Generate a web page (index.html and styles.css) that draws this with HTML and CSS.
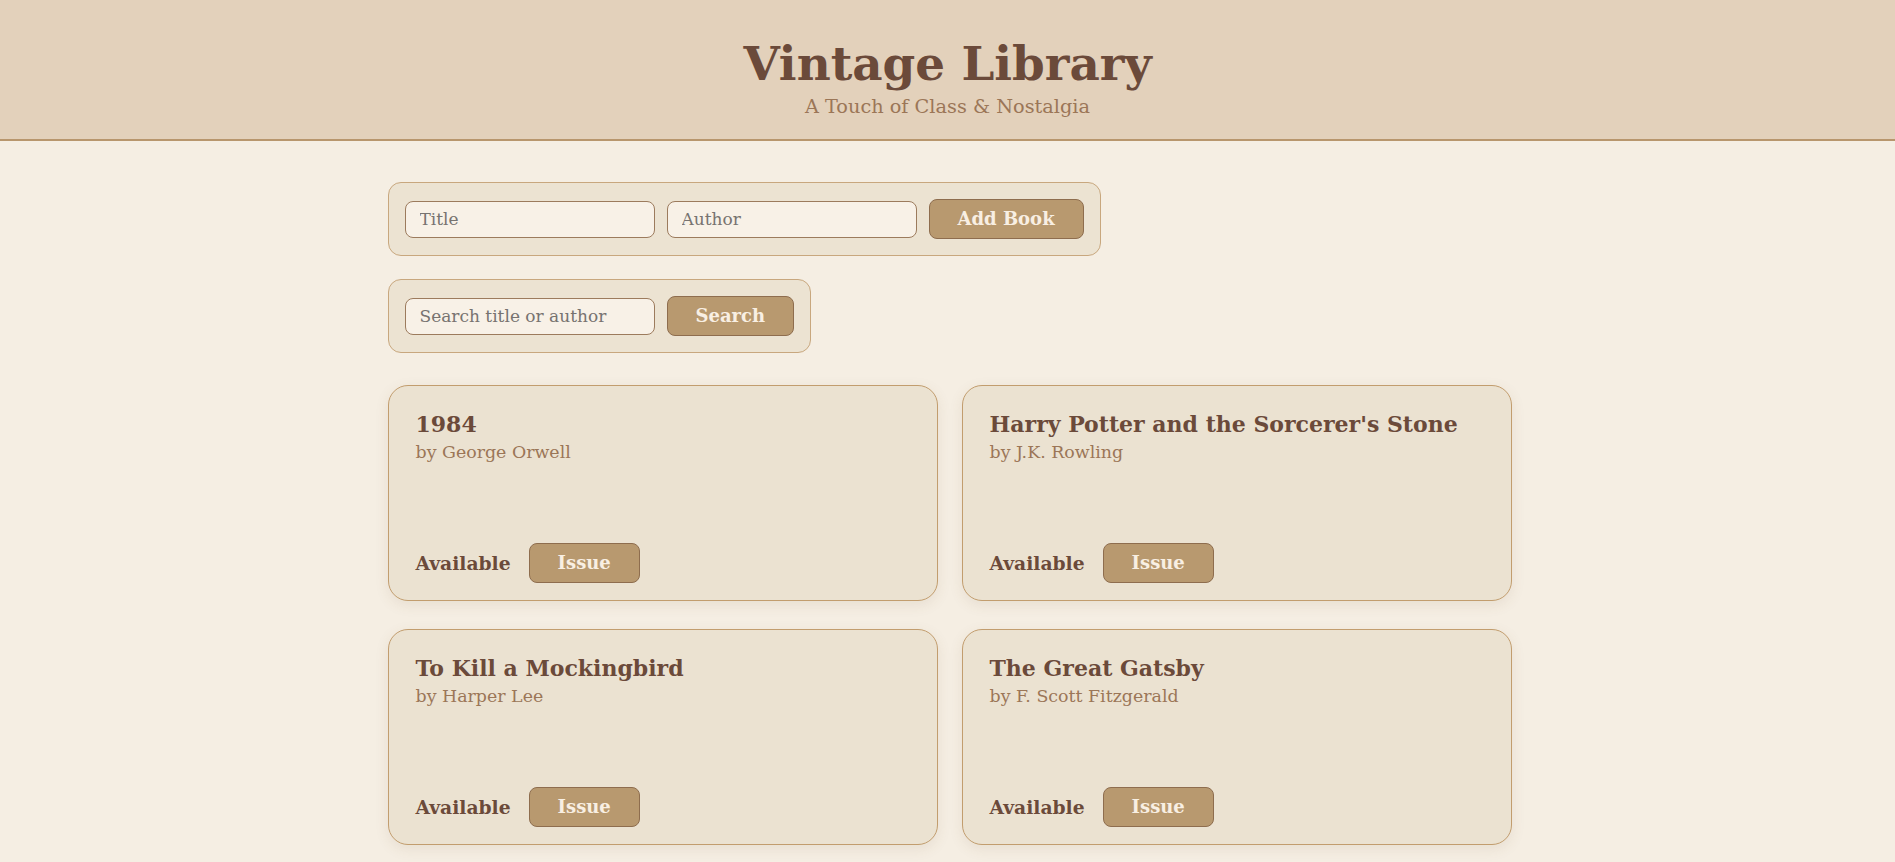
FILE: index.html
```html
<!DOCTYPE html>
<html lang="en">
<head>
<meta charset="utf-8">
<title>Vintage Library</title>
<link rel="stylesheet" href="styles.css">
</head>
<body>
<header class="site-header">
  <h1 class="site-title">Vintage Library</h1>
  <p class="site-subtitle">A Touch of Class &amp; Nostalgia</p>
</header>
<main class="container">
  <form class="panel">
    <input class="field" type="text" placeholder="Title">
    <input class="field" type="text" placeholder="Author">
    <button class="btn" type="button">Add Book</button>
  </form>
  <form class="panel">
    <input class="field" type="text" placeholder="Search title or author">
    <button class="btn" type="button">Search</button>
  </form>
  <section class="book-grid">
    <article class="book-card">
      <h3 class="book-title">1984</h3>
      <p class="book-author">by George Orwell</p>
      <div class="book-footer">
        <span class="book-status">Available</span>
        <button class="btn" type="button">Issue</button>
      </div>
    </article>
    <article class="book-card">
      <h3 class="book-title">Harry Potter and the Sorcerer's Stone</h3>
      <p class="book-author">by J.K. Rowling</p>
      <div class="book-footer">
        <span class="book-status">Available</span>
        <button class="btn" type="button">Issue</button>
      </div>
    </article>
    <article class="book-card">
      <h3 class="book-title">To Kill a Mockingbird</h3>
      <p class="book-author">by Harper Lee</p>
      <div class="book-footer">
        <span class="book-status">Available</span>
        <button class="btn" type="button">Issue</button>
      </div>
    </article>
    <article class="book-card">
      <h3 class="book-title">The Great Gatsby</h3>
      <p class="book-author">by F. Scott Fitzgerald</p>
      <div class="book-footer">
        <span class="book-status">Available</span>
        <button class="btn" type="button">Issue</button>
      </div>
    </article>
  </section>
</main>
</body>
</html>
```
FILE: styles.css
```css
* {
  box-sizing: border-box;
}

body {
  margin: 0;
  background: #f5eee3;
  font-family: "DejaVu Serif", Georgia, serif;
  color: #6b4a3a;
}

.site-header {
  background: #e3d1bb;
  border-bottom: 2px solid #b8966d;
  padding: 37px 16px 21px;
  text-align: center;
}

.site-title {
  margin: 0;
  font-size: 46.8px;
  line-height: 54px;
  font-weight: bold;
  color: #6b4a3a;
}

.site-subtitle {
  margin: 5px 0 0;
  font-size: 19.3px;
  line-height: 22px;
  color: #9b7657;
}

.container {
  width: 1124px;
  margin-left: calc(50% - 560px);
  padding: 41px 0 40px;
}

.panel {
  display: flex;
  width: fit-content;
  align-items: center;
  gap: 12px;
  padding: 16px;
  margin: 0 0 23px;
  background: #ece3d2;
  border: 1px solid #c8a77e;
  border-radius: 13px;
}

.panel + .panel {
  margin-bottom: 32px;
}

.field {
  width: 250px;
  height: 37px;
  padding: 0 14px;
  font-family: inherit;
  font-size: 17px;
  color: #6b4a3a;
  background: #f8f1e7;
  border: 1px solid #9c7b5d;
  border-radius: 8px;
  outline: none;
}

.field::placeholder {
  color: #777370;
}

.btn {
  height: 40px;
  padding: 0 28px;
  font-family: inherit;
  font-size: 18px;
  font-weight: bold;
  line-height: 22px;
  color: #f8efe3;
  background: #b8996f;
  border: 1px solid #8e6d4e;
  border-radius: 8px;
  cursor: pointer;
}

.book-grid {
  display: grid;
  grid-template-columns: 1fr 1fr;
  column-gap: 24px;
  row-gap: 28px;
}

.book-card {
  display: flex;
  flex-direction: column;
  height: 216px;
  padding: 25px 24px 17px 27px;
  background: #ebe2d1;
  border: 1px solid #c29d6e;
  border-radius: 20px;
  box-shadow: 0 4px 14px rgba(120, 85, 50, 0.10);
}

.book-title {
  margin: 0;
  font-size: 22px;
  line-height: 27px;
  font-weight: bold;
  color: #6b4a3a;
}

.book-author {
  margin: 4px 0 0;
  font-size: 17.4px;
  line-height: 21px;
  color: #9b7657;
}

.book-footer {
  margin-top: auto;
  display: flex;
  align-items: center;
  gap: 18px;
}

.book-status {
  font-size: 18.7px;
  font-weight: bold;
  color: #6b4a3a;
}
```
